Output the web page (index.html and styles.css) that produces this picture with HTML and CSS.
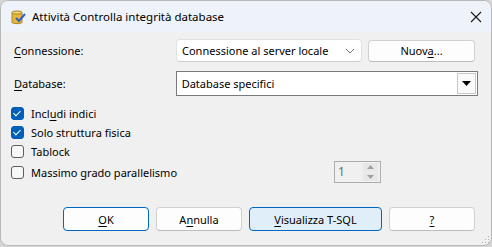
FILE: index.html
```html
<!DOCTYPE html>
<html lang="it">
<head>
    <meta charset="UTF-8">
    <title>Attività Controlla integrità database</title>
    <link rel="stylesheet" href="styles.css">
</head>
<body>
    <div class="window">
        <div class="titlebar">
            <svg class="app-icon" width="16" height="16" viewBox="0 0 16 16">
                <path d="M2 3.5 C2 2 12 2 12 3.5 V13.5 C12 15 2 15 2 13.5 Z" fill="#e8b63a" stroke="#9a7416" stroke-width="0.8"/>
                <ellipse cx="7" cy="3.5" rx="5" ry="1.5" fill="#f6dc7c" stroke="#9a7416" stroke-width="0.8"/>
                <path d="M6 9 L9 12 L15 5" fill="none" stroke="#2d62c8" stroke-width="2"/>
            </svg>
            <span class="title">Attività Controlla integrità database</span>
            <svg class="close" width="12" height="12" viewBox="0 0 12 12">
                <path d="M1 1 L11 11 M11 1 L1 11" stroke="#1a1a1a" stroke-width="1.1"/>
            </svg>
        </div>

        <div class="content">
            <div class="row row-conn">
                <div class="label"><u>C</u>onnessione:</div>
                <div class="combo">
                    <span>Connessione al server locale</span>
                    <svg width="10" height="6" viewBox="0 0 10 6"><path d="M1 1 L5 5 L9 1" fill="none" stroke="#777" stroke-width="1"/></svg>
                </div>
                <button class="btn btn-new">Nuov<u>a</u>...</button>
            </div>

            <div class="row row-db">
                <div class="label"><u>D</u>atabase:</div>
                <div class="combo-classic">
                    <span>Database specifici</span>
                    <div class="drop">
                        <svg width="9" height="5" viewBox="0 0 9 5"><path d="M0 0 H9 L4.5 5 Z" fill="#000"/></svg>
                    </div>
                </div>
            </div>

            <div class="checks">
                <label class="check"><span class="box checked"></span>Incl<u>u</u>di indici</label>
                <label class="check"><span class="box checked"></span>Solo struttura fisica</label>
                <label class="check"><span class="box"></span>Tablock</label>
                <div class="check check-last">
                    <span class="box"></span>Massimo grado parallelismo
                    <div class="spin">
                        <span class="spin-val">1</span>
                        <div class="spin-btns">
                            <div class="spin-btn"><svg width="7" height="4" viewBox="0 0 7 4"><path d="M0 4 H7 L3.5 0 Z" fill="#a0a0a0"/></svg></div>
                            <div class="spin-btn"><svg width="7" height="4" viewBox="0 0 7 4"><path d="M0 0 H7 L3.5 4 Z" fill="#a0a0a0"/></svg></div>
                        </div>
                    </div>
                </div>
            </div>

            <div class="buttons">
                <button class="btn btn-default"><u>O</u>K</button>
                <button class="btn">A<u>n</u>nulla</button>
                <button class="btn btn-hover"><u>V</u>isualizza T-SQL</button>
                <button class="btn"><u>?</u></button>
            </div>
        </div>
        <div class="grip"></div>
    </div>
</body>
</html>
```

FILE: styles.css
```css
html, body {
    margin: 0;
    padding: 0;
}

body {
    width: 492px;
    height: 247px;
    background: #d6d6d6;
    font-family: "Noto Sans", "Liberation Sans", sans-serif;
    font-size: 11px;
    color: #000;
    overflow: hidden;
}

u {
    text-decoration-thickness: 1px;
    text-underline-offset: 2px;
}

.window {
    position: relative;
    width: 490px;
    height: 244px;
    border: 1px solid #b8b8b8;
    border-radius: 8px;
    background: #f0f0f0;
    overflow: hidden;
}

.titlebar {
    height: 31px;
    background: #eef2f9;
    display: flex;
    align-items: center;
    padding-left: 9px;
}

.app-icon {
    margin-right: 6px;
}

.title {
    flex: 1;
    font-size: 11.5px;
    line-height: 16px;
}

.close {
    margin-right: 9px;
}

.content {
    padding: 7px 13px 0 13px;
}

.row {
    display: flex;
    align-items: center;
}

.label {
    width: 162px;
}

.combo {
    width: 186px;
    height: 23px;
    background: #fff;
    border: 1px solid #e1e1e1;
    border-bottom-color: #cfcfcf;
    border-radius: 4px;
    display: flex;
    align-items: center;
    justify-content: space-between;
    padding: 0 6px 0 5px;
    box-sizing: border-box;
}

.btn {
    font-family: inherit;
    font-size: 11px;
    color: #000;
    background: #fdfdfd;
    border: 1px solid #d0d0d0;
    border-bottom-color: #bdbdbd;
    border-radius: 4px;
    height: 24px;
    padding: 0;
    box-sizing: border-box;
}

.btn-new {
    width: 107px;
    height: 22px;
    margin-left: 6px;
}

.row-db {
    margin-top: 9px;
}

.combo-classic {
    width: 303px;
    height: 25px;
    box-sizing: border-box;
    border: 1px solid #7a7a7a;
    background: #fff;
    display: flex;
    align-items: center;
    padding-left: 5px;
}

.combo-classic span {
    flex: 1;
}

.drop {
    width: 19px;
    height: 21px;
    margin-right: 1px;
    border: 1px solid #c8c8c8;
    box-sizing: border-box;
    background: #fafafa;
    display: flex;
    align-items: center;
    justify-content: center;
}

.checks {
    margin-top: 8px;
    margin-left: -3px;
}

.check {
    display: flex;
    align-items: center;
    height: 19px;
}

.check-last {
    height: 22px;
}

.box {
    width: 13px;
    height: 13px;
    box-sizing: border-box;
    border: 1px solid #5d5d5d;
    border-radius: 3px;
    background: #f7f7f7;
    margin-right: 7px;
    position: relative;
}

.box.checked {
    background: #005fb8;
    border-color: #005fb8;
}

.box.checked::after {
    content: "";
    position: absolute;
    left: 3px;
    top: 1px;
    width: 3px;
    height: 6px;
    border: solid #fff;
    border-width: 0 1.3px 1.3px 0;
    transform: rotate(45deg);
}

.spin {
    margin-left: auto;
    margin-right: 97px;
    width: 47px;
    height: 22px;
    box-sizing: border-box;
    border: 1px solid #adadad;
    display: flex;
    align-items: stretch;
}

.spin-val {
    flex: 1;
    color: #6d6d6d;
    font-size: 12px;
    padding-left: 3px;
    line-height: 20px;
}

.spin-btns {
    width: 15px;
    margin: 1px 2px 1px 0;
    display: flex;
    flex-direction: column;
    gap: 1px;
}

.spin-btn {
    flex: 1;
    background: #e8e8e8;
    display: flex;
    align-items: center;
    justify-content: center;
}

.buttons {
    display: flex;
    gap: 7px;
    margin-top: 24px;
    padding-left: 49px;
}

.buttons .btn {
    width: 86px;
}

.buttons .btn:nth-child(3) {
    width: 133px;
}

.btn-default {
    border: 1px solid #0067c0;
}

.btn-hover {
    background: #e0eef9;
    border: 1px solid #0067c0;
}

.grip {
    position: absolute;
    right: 2px;
    bottom: 2px;
    width: 8px;
    height: 8px;
    background:
        radial-gradient(circle, #b0b0b0 1px, transparent 1px) 0 0 / 3px 3px;
    clip-path: polygon(100% 0, 100% 100%, 0 100%);
}
```
